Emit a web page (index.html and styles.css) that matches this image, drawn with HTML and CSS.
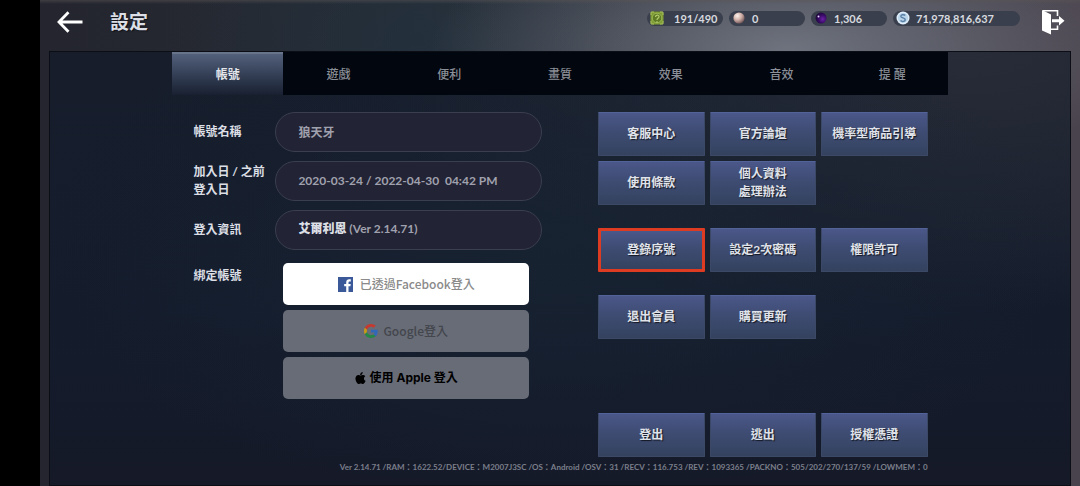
FILE: index.html
```html
<!DOCTYPE html>
<html lang="zh-Hant">
<head>
<meta charset="utf-8">
<meta name="viewport" content="width=device-width, initial-scale=1">
<title>設定</title>
<link rel="stylesheet" href="styles.css">
</head>
<body>
<div class="stage">
  <header class="topbar">
    <button class="icon-button" type="button" aria-label="返回">
      <svg width="26" height="22" viewBox="0 0 26 22" fill="none" stroke="#fff" stroke-width="2.800"><path d="M11.500 1.200 2 11l9.500 9.800M2 11h23.500"/></svg>
    </button>
    <h1 class="title">設定</h1>
    <ul class="wallet">
      <li class="pill">
        <svg class="coin" viewBox="0 0 16 16"><rect x="1.500" y="1.500" width="13" height="13" rx="3" fill="#7f9d35"/><path d="M2 5V2h3M11 2h3v3M14 11v3h-3M5 14H2v-3" fill="none" stroke="#a9c060"/><circle cx="8" cy="8" r="4.800" fill="#5f7c25" stroke="#9db955"/><path d="M6.500 7c0-2.500 3.500-2.500 3.500-.5C10 8.500 8 8 8 10M7 12h2" fill="none" stroke="#b5cc70" stroke-width="1.200"/></svg>
        <span class="amount amount-wide">191/490</span>
      </li>
      <li class="pill">
        <svg class="coin" viewBox="0 0 16 16"><defs><radialGradient id="pearl" cx=".35" cy=".3" r=".75"><stop offset="0" stop-color="#fff3ec"/><stop offset=".5" stop-color="#cfb0a8"/><stop offset="1" stop-color="#6d5153"/></radialGradient></defs><circle cx="8" cy="8" r="5.600" fill="url(#pearl)"/></svg>
        <span class="amount">0</span>
      </li>
      <li class="pill">
        <svg class="coin" viewBox="0 0 16 16"><defs><radialGradient id="orb" cx=".65" cy=".6" r=".7"><stop offset="0" stop-color="#6d20a8"/><stop offset=".55" stop-color="#360a62"/><stop offset="1" stop-color="#1a0933"/></radialGradient></defs><circle cx="8" cy="8" r="5.500" fill="url(#orb)"/><circle cx="5.500" cy="6.500" r="1" fill="#e7d4ff"/></svg>
        <span class="amount">1,306</span>
      </li>
      <li class="pill pill-long">
        <svg class="coin" viewBox="0 0 16 16"><circle cx="8" cy="8" r="6.500" fill="#dfeefa"/><circle cx="8" cy="8" r="5" fill="#b9d3e8"/><path d="M10.300 5.400C8.600 4 5.700 4.700 5.900 6.400 6.200 8.200 10.200 7.600 10.200 9.700 10.200 11.600 7 12 5.500 10.500" fill="none" stroke="#587fa6" stroke-width="1.500"/></svg>
        <span class="amount">71,978,816,637</span>
      </li>
    </ul>
    <button class="icon-button" type="button" aria-label="離開">
      <svg width="24" height="26" viewBox="0 0 24 26"><path d="M1 1 10 5.500V25.500L1 21.500Z" fill="#fff"/><path d="M2 1.700H16.500V7M16.500 16.500V20.300H10" fill="none" stroke="#fff" stroke-width="1.600"/><path d="M11 10.300h7V7l5.500 4.700-5.500 4.700v-3.200h-7z" fill="#fff"/></svg>
    </button>
  </header>

  <main class="panel">
    <div class="column">
      <nav class="tabs">
        <button class="tab tab-active" type="button">帳號</button>
        <button class="tab" type="button">遊戲</button>
        <button class="tab" type="button">便利</button>
        <button class="tab" type="button">畫質</button>
        <button class="tab" type="button">效果</button>
        <button class="tab" type="button">音效</button>
        <button class="tab" type="button">提 醒</button>
      </nav>

      <div class="content">
        <section class="account">
          <div class="row">
            <label class="label" for="name">帳號名稱</label>
            <input class="field" id="name" type="text" value="狼天牙" readonly>
          </div>
          <div class="row">
            <label class="label" for="dates">加入日 / 之前<br>登入日</label>
            <input class="field" id="dates" type="text" value="2020-03-24 / 2022-04-30&nbsp; 04:42 PM" readonly>
          </div>
          <div class="row">
            <label class="label" for="server">登入資訊</label>
            <output class="field" id="server"><b class="server-name">艾爾利恩</b>&nbsp;(Ver 2.14.71)</output>
          </div>
          <div class="row row-links">
            <span class="label" id="link-label">綁定帳號</span>
            <div class="links" role="group" aria-labelledby="link-label">
              <button class="login login-facebook" type="button">
                <svg width="15" height="15" viewBox="0 0 15 15"><rect width="15" height="15" fill="#3b5998"/><path d="M8.200 15V9.200H6.200V7h2V5.400C8.200 3.300 9.400 2.300 11.300 2.300h1.500v2.100h-1.100c-.9 0-1.200.4-1.200 1.200V7h2.200l-.3 2.200h-1.900V15z" fill="#fff"/></svg>
                <span>已透過Facebook登入</span>
              </button>
              <button class="login login-google" type="button">
                <svg width="14" height="14" viewBox="0 0 48 48"><path fill="#c5392f" d="M24 9.500c3.540 0 6.710 1.220 9.210 3.600l6.850-6.850C35.900 2.380 30.470 0 24 0 14.620 0 6.510 5.380 2.560 13.220l7.980 6.190C12.430 13.720 17.740 9.500 24 9.500z"/><path fill="#3268b8" d="M46.980 24.550c0-1.570-.15-3.090-.38-4.550H24v9.020h12.940c-.58 2.960-2.260 5.480-4.780 7.180l7.730 6c4.510-4.180 7.090-10.360 7.090-17.650z"/><path fill="#c99a14" d="M10.530 28.590A14.500 14.500 0 0 1 9.770 24c0-1.600.27-3.140.76-4.590l-7.980-6.190A24 24 0 0 0 0 24c0 3.880.92 7.540 2.560 10.780z"/><path fill="#258845" d="M24 48c6.480 0 11.930-2.130 15.890-5.810l-7.730-6c-2.150 1.450-4.920 2.300-8.160 2.300-6.260 0-11.570-4.220-13.470-9.910l-7.980 6.190C6.510 42.620 14.620 48 24 48z"/></svg>
                <span>Google登入</span>
              </button>
              <button class="login login-apple" type="button">
                <svg width="11" height="12" viewBox="0 0 22 26"><path d="M15.800 0c.2 2-.6 3.600-1.600 4.800-1 1.200-2.600 2-4 1.900-.2-1.800.6-3.500 1.600-4.600C12.800.9 14.500.1 15.800 0zM21.300 9.200c-1.800 1.100-2.800 2.600-2.800 4.800 0 2.500 1.300 4.300 3.500 5.200-.6 1.700-1.500 3.300-2.600 4.700-1 1.300-2 2-3.400 2-1.600 0-2.300-1-4.400-1s-2.900 1-4.400 1c-1.500.1-2.600-.9-3.600-2.200C.6 19.900-1.300 13.500 1.300 9.600c1.300-2 3.300-3 5.300-3.100 1.700 0 3.100 1.100 4.700 1.100 1.200 0 2.800-1.300 5.200-1.100 2 .1 3.700 1.100 4.800 2.700z"/></svg>
                <span>使用 Apple 登入</span>
              </button>
            </div>
          </div>
        </section>

        <section class="actions">
          <div class="action-group">
            <button class="action" type="button">客服中心</button>
            <button class="action" type="button">官方論壇</button>
            <button class="action" type="button">機率型商品引導</button>
            <button class="action" type="button">使用條款</button>
            <button class="action" type="button">個人資料<br>處理辦法</button>
          </div>
          <div class="action-group">
            <button class="action action-marked" type="button">登錄序號</button>
            <button class="action" type="button">設定2次密碼</button>
            <button class="action" type="button">權限許可</button>
          </div>
          <div class="action-group">
            <button class="action" type="button">退出會員</button>
            <button class="action" type="button">購買更新</button>
          </div>
          <div class="action-group action-group-last">
            <button class="action" type="button">登出</button>
            <button class="action" type="button">逃出</button>
            <button class="action" type="button">授權憑證</button>
          </div>
        </section>
      </div>
      <p class="build">Ver 2.14.71 /RAM：1622.52/DEVICE：M2007J3SC /OS：Android /OSV：31 /RECV：116.753 /REV：1093365 /PACKNO：505/202/270/137/59 /LOWMEM：0</p>
    </div>
  </main>
</div>
</body>
</html>
```

FILE: styles.css
```css
* {
  box-sizing: border-box;
}

body {
  margin: 0;
  padding-left: 40px;
  background: #000;
  color: #dcdfe5;
  font-family: Lato, "Noto Sans CJK TC", sans-serif;
  font-size: 12px;
  line-height: 18px;
}

button,
input {
  margin: 0;
  padding: 0;
  border: 0;
  background: none;
  color: inherit;
  font: inherit;
}

.stage {
  display: flex;
  flex-direction: column;
  min-height: 100vh;
  padding: 0 9px;
  background:
    linear-gradient(180deg, rgba(90, 85, 85, 0.5), rgba(90, 85, 85, 0) 4px),
    radial-gradient(ellipse 360px 130px at 72% 50px, rgba(120, 124, 136, 0.85), rgba(120, 124, 136, 0)),
    radial-gradient(ellipse 240px 160px at 36% 40px, rgba(32, 50, 64, 0.6), rgba(32, 50, 64, 0)),
    linear-gradient(90deg, #24252e, #272c35 35%, #3d4049 75%, #49434d);
}

.topbar {
  display: flex;
  align-items: center;
  height: 51px;
  padding: 0 6px 7px 8px;
}

.icon-button {
  display: flex;
}

.title {
  margin: 0 auto 0 27px;
  font-size: 19px;
  font-weight: 700;
  line-height: 28px;
  text-shadow: 1px 1px 1px rgba(0, 0, 0, 0.6);
}

.wallet {
  display: flex;
  gap: 6px;
  margin: 0 21px 0 0;
  padding: 0 0 8px;
  list-style: none;
}

.pill {
  display: flex;
  align-items: center;
  width: 76px;
  height: 15px;
  border-radius: 8px;
  background: #3a3f4d;
}

.pill-long {
  width: 127px;
}

.coin {
  flex: none;
  width: 16px;
  height: 16px;
  margin-left: 2px;
}

.amount {
  padding-left: 5px;
  font-size: 11px;
  font-weight: 700;
  line-height: 15px;
  color: #d6d9df;
}

.amount-wide {
  padding-left: 9px;
}

.panel {
  flex: 1;
  display: flex;
  justify-content: center;
  border: 1px solid #0b0e15;
  background:
    radial-gradient(ellipse 50% 60% at 50% 45%, rgba(24, 36, 51, 0.8), rgba(24, 36, 51, 0)),
    radial-gradient(ellipse 60% 60% at 90% 0, #282c38, rgba(34, 39, 50, 0)),
    linear-gradient(180deg, #171d2b, #141c2c 60%, #151928);
}

.column {
  width: 76%;
}

.tabs {
  display: grid;
  grid-template-columns: repeat(7, 1fr);
  height: 43px;
  background: #02060f;
}

.tab {
  color: #8b8f97;
  padding-top: 2px;
  font-weight: 500;
}

.tab-active {
  border-top: 2px solid #68748a;
  background: linear-gradient(180deg, #53607b, #37435a 45%, #192031);
  color: #e4e6eb;
  padding-top: 0;
  font-weight: 700;
}

.content {
  display: grid;
  grid-template-columns: minmax(0, 349fr) minmax(0, 330fr);
  gap: 56px;
  padding: 17px 20px 0 21px;
}

.account {
  display: flex;
  flex-direction: column;
  gap: 9px;
}

.row {
  display: grid;
  grid-template-columns: 82px 1fr;
  align-items: center;
}

.label {
  font-weight: 700;
}

.field {
  display: flex;
  align-items: center;
  width: 100%;
  height: 40px;
  padding: 0 22px 2px;
  border: 1px solid #3a3e4e;
  border-radius: 20px;
  background: #222334;
  color: #a0a1ae;
  font-size: 12px;
  font-weight: 700;
}

.server-name {
  color: #dcdfe5;
}

.row-links {
  align-items: start;
  padding-top: 4px;
}

.row-links .label {
  padding-top: 4px;
}

.links {
  display: flex;
  flex-direction: column;
  gap: 5px;
  padding: 0 13px 0 8px;
}

.login {
  display: flex;
  align-items: center;
  justify-content: center;
  gap: 7px;
  height: 42px;
  border-radius: 5px;
  font-family: "Noto Sans CJK TC", sans-serif;
  font-weight: 500;
}

.login-facebook {
  background: #fff;
  color: #8a8a8a;
}

.login-google {
  gap: 5px;
  background: #686c77;
  color: #43464c;
}

.login-apple {
  gap: 4px;
  background: #686c77;
  color: #000;
  font-family: Inter, "Noto Sans CJK TC", sans-serif;
  font-weight: 700;
}

.actions {
  display: flex;
  flex-direction: column;
  gap: 23px;
}

.action-group {
  display: grid;
  grid-template-columns: repeat(3, 1fr);
  gap: 5px;
}

.action-group-last {
  padding-top: 51px;
}

.action {
  height: 44px;
  border: 1px solid #3b4966;
  border-top-color: #53639a;
  border-radius: 1px;
  background: linear-gradient(180deg, #4a5789, #3e4c73 45%, #34425f);
  color: #e0e3ea;
  font-weight: 700;
  text-shadow: 1px 1px 1px rgba(0, 0, 0, 0.7);
}

.action-marked {
  border: 3px solid #dd3b22;
}

.build {
  margin: 2px 20px 0;
  color: #7b7f8b;
  font-size: 8px;
  font-weight: 700;
  line-height: 16px;
  text-align: right;
}
```
